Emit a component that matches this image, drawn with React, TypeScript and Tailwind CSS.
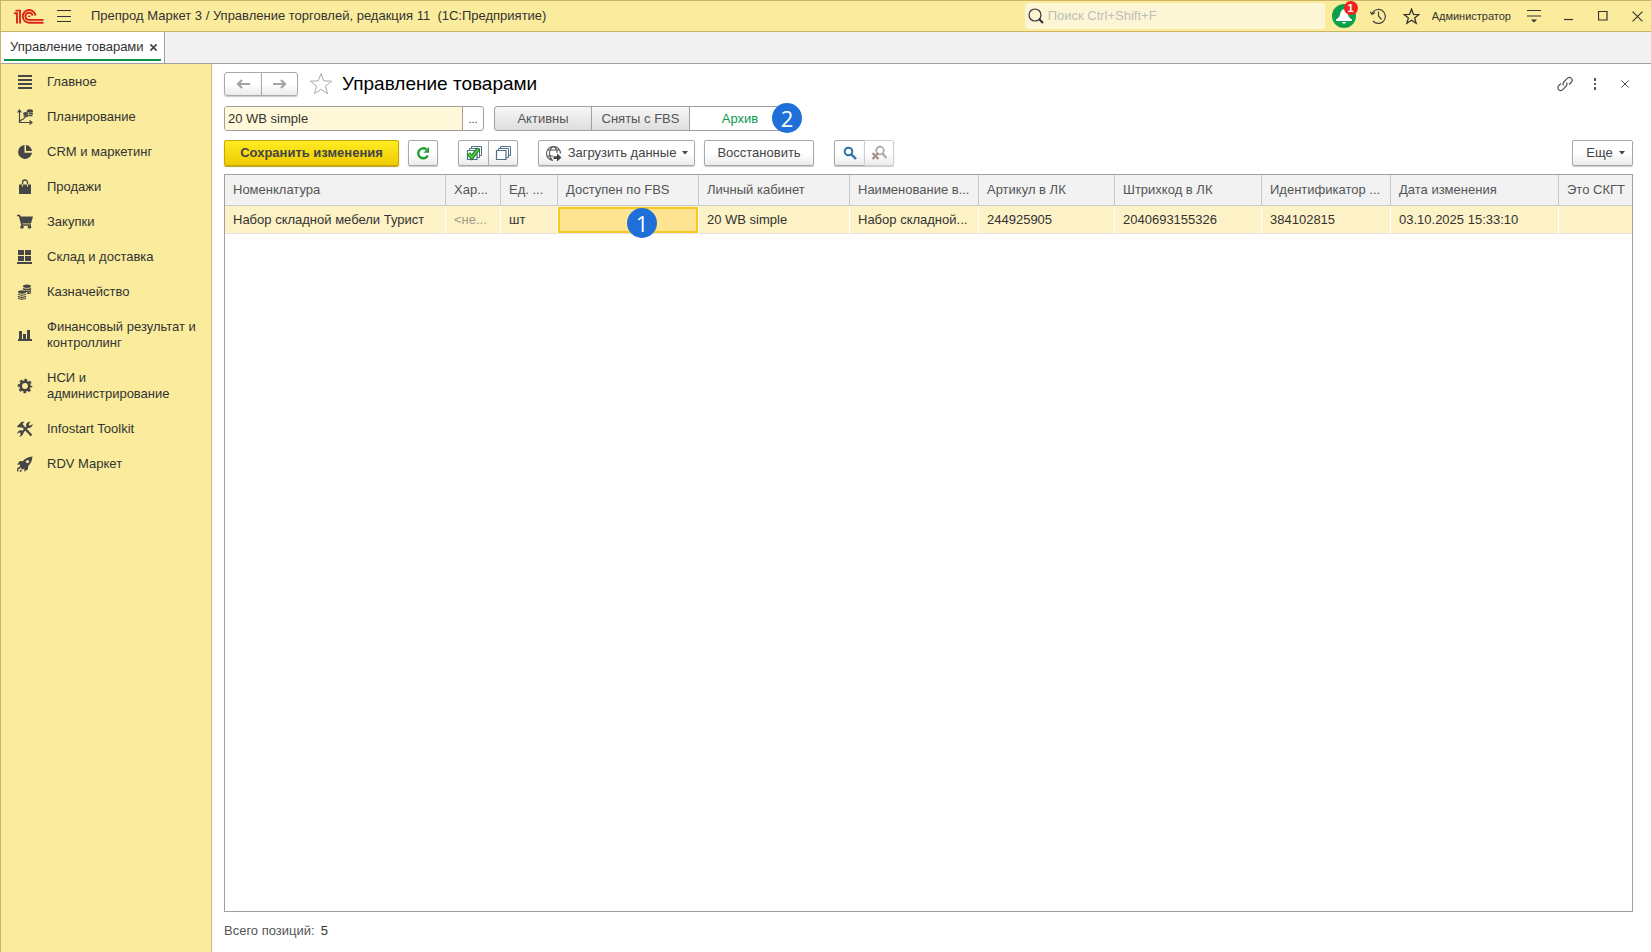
import type { ReactNode } from "react";
import { clsx } from "clsx";

type IconProps = { className?: string };

const btn =
  "flex items-center justify-center border border-[#a9a9a9] bg-linear-to-b from-white from-50% to-[#ebebeb] text-[#444] shadow-[0_1px_1px_#c8c8c8]";

function Svg({ size, box = size, children, className }: { size: number; box?: number; children: ReactNode; className?: string }) {
  return (
    <svg width={size} height={size} viewBox={`0 0 ${box} ${box}`} className={clsx("shrink-0", className)} fill="none" aria-hidden="true">
      {children}
    </svg>
  );
}

function Logo() {
  return (
    <svg width="30" height="15" viewBox="0 0 30 15" fill="none" stroke="#dc2418" strokeWidth="1.9" className="shrink-0" aria-hidden="true">
      <path d="M0 4.300h3V14.500M1.500 1.600H6V14.500" />
      <path d="M21.500 6.500A6.400 6.400 0 1 0 15 13.800h14.500" />
      <path d="M18.500 6.600A3.600 3.600 0 1 0 15 10.900h14.500" />
      <path d="M14 7.300h2.300" strokeWidth="1.400" />
    </svg>
  );
}

const MainIcon = () => (
  <Svg size={16}>
    <path d="M1 2h14M1 6h14M1 10h14M1 14h14" stroke="#464646" strokeWidth="2" />
  </Svg>
);
const PlanIcon = () => (
  <Svg size={16}>
    <path d="M2.500 14V2M2 13.500h12M.5 3.500 2.500 1l2 2.500M12.500 11.500l2.500 2-2.500 2M3 12l2-1.500 1.500-.5L8 8l2-.5 1-1.500" stroke="#464646" strokeWidth="1.200" />
    <ellipse cx="12.800" cy="1.900" rx="3.200" ry="1.600" fill="#464646" />
    <ellipse cx="8.800" cy="4.400" rx="2.800" ry="1.500" fill="#464646" />
    <path d="M6.500 6.800h5M12 4.500h4M12 6.500h3.500" stroke="#464646" strokeWidth="1.400" />
  </Svg>
);
const PieIcon = () => (
  <Svg size={16}>
    <path d="M7.500 1A7 7 0 1 0 15 8.800H7.500z" fill="#464646" />
    <path d="M9 1a6.500 6.500 0 0 1 6 6H9z" fill="#464646" />
  </Svg>
);
const BagIcon = () => (
  <Svg size={16}>
    <path d="M2 5.500h12V15H2z" fill="#464646" />
    <path d="M5.500 5.500V3.500a2.500 2.500 0 0 1 5 0v2" stroke="#464646" strokeWidth="1.300" />
    <path d="M5.500 5.500v2M10.500 5.500v2" stroke="#faec9c" />
  </Svg>
);
const CartIcon = () => (
  <Svg size={16}>
    <path d="M0 1.500h2.500L5 11h9" stroke="#464646" strokeWidth="1.600" />
    <path d="M3 2.500h13l-2 7H5z" fill="#464646" />
    <circle cx="5" cy="13" r="1.800" fill="#464646" />
    <circle cx="12.500" cy="13" r="1.800" fill="#464646" />
  </Svg>
);
const StockIcon = () => (
  <Svg size={16}>
    <path d="M1 1h6v5H1zM8 1h6v5H8zM1 7h6v5H1zM8 7h6v5H8zM0 13h15v2H0z" fill="#464646" />
  </Svg>
);
const CoinsIcon = () => (
  <Svg size={16}>
    <ellipse cx="10" cy="2.200" rx="4" ry="1.700" fill="#464646" />
    <path d="M6 4.500c1 1.300 7 1.300 8 0M8 6.800c2 1 5 .8 6-.3M10 9c2 .5 3 .2 4-.5" stroke="#464646" strokeWidth="1.400" />
    <ellipse cx="5" cy="8" rx="4" ry="1.700" fill="#464646" />
    <path d="M1 10c1 1.500 7 1.500 8 0M1 12.200c1 1.500 7 1.500 8 0M1 14c1 1.500 7 1.500 8 0" stroke="#464646" strokeWidth="1.300" />
  </Svg>
);
const ChartIcon = () => (
  <Svg size={16}>
    <path d="M2 4h3v8H2zM6 7h3v5H6zM10 3h3v9h-3zM1 12h14v2H1z" fill="#464646" />
  </Svg>
);
const GearIcon = () => (
  <Svg size={16}>
    <circle cx="8" cy="8" r="4.300" stroke="#464646" strokeWidth="2.800" />
    <circle cx="8" cy="8" r="6.200" stroke="#464646" strokeWidth="2.200" strokeDasharray="2.600 2.270" strokeDashoffset="1.300" />
  </Svg>
);
const ToolsIcon = () => (
  <Svg size={16}>
    <path d="M4.500 4 14.500 14.500" stroke="#464646" strokeWidth="2.400" />
    <path d="M0 5.500 4.500.8h3L5.500 3l1 1.500L3.800 7 2.500 5.800 1.300 6.800z" fill="#464646" />
    <path d="M12 4.500 3.500 13" stroke="#464646" strokeWidth="2.200" />
    <path d="M13.500.8 11.800 3v1.500h1.700L15.700 3A4 4 0 0 1 11 7L9 5a4 4 0 0 1 4.500-4.200zM2 15.500l2-2v-2h-2L.2 13A3.500 3.500 0 0 1 5 9.500l1.500 1.500A4 4 0 0 1 2 15.500z" fill="#464646" />
  </Svg>
);
const RocketIcon = () => (
  <Svg size={16}>
    <path d="M15.500.5C11 .8 8 2.500 6 5L2.500 5.200.2 8.800l3-.3-.7 2.300 2.700 2.700 2.300-.7-.3 3 3.800-2.500.2-3.300C13.500 8 15.200 5 15.500.500z" fill="#464646" />
    <circle cx="10.500" cy="5.500" r="1.600" fill="#faec9c" />
    <path d="M.5 15.500 1 12.500l2-1M3 15.500l1.500-1.500" stroke="#464646" strokeWidth="1.500" />
  </Svg>
);

const sections: { label: string; Icon: () => ReactNode }[] = [
  { label: "Главное", Icon: MainIcon },
  { label: "Планирование", Icon: PlanIcon },
  { label: "CRM и маркетинг", Icon: PieIcon },
  { label: "Продажи", Icon: BagIcon },
  { label: "Закупки", Icon: CartIcon },
  { label: "Склад и доставка", Icon: StockIcon },
  { label: "Казначейство", Icon: CoinsIcon },
  { label: "Финансовый результат и контроллинг", Icon: ChartIcon },
  { label: "НСИ и администрирование", Icon: GearIcon },
  { label: "Infostart Toolkit", Icon: ToolsIcon },
  { label: "RDV Маркет", Icon: RocketIcon },
];

const columns = [
  { title: "Номенклатура", value: "Набор складной мебели Турист", width: "w-[221px]" },
  { title: "Хар...", value: "<не...", width: "w-[55px]", muted: true },
  { title: "Ед. ...", value: "шт", width: "w-[57px]" },
  { title: "Доступен по FBS", value: "", width: "w-[141px]", selected: true },
  { title: "Личный кабинет", value: "20 WB simple", width: "w-[151px]" },
  { title: "Наименование в...", value: "Набор складной...", width: "w-[129px]" },
  { title: "Артикул в ЛК", value: "244925905", width: "w-[136px]" },
  { title: "Штрихкод в ЛК", value: "2040693155326", width: "w-[147px]" },
  { title: "Идентификатор ...", value: "384102815", width: "w-[129px]" },
  { title: "Дата изменения", value: "03.10.2025 15:33:10", width: "w-[168px]" },
  { title: "Это СКГТ", value: "", width: "w-[74px]" },
];

function Cross({ size, width = 1.2, className }: { size: number; width?: number; className?: string }) {
  return (
    <Svg size={size} box={10} className={className}>
      <path d="M.5.5l9 9M9.500.5l-9 9" stroke="currentColor" strokeWidth={width} />
    </Svg>
  );
}

function Caret() {
  return (
    <svg width="6" height="4" viewBox="0 0 6 4" fill="currentColor" aria-hidden="true">
      <path d="M0 0h6L3 3.500z" />
    </svg>
  );
}

function Star({ size, className, width }: IconProps & { size: number; width: number }) {
  return (
    <Svg size={size} box={24} className={className}>
      <path d="M12 1.500l2.700 7.400 7.900.3-6.200 4.900 2.200 7.600L12 17.300l-6.600 4.400 2.200-7.600L1.400 9.200l7.900-.3z" stroke="currentColor" strokeWidth={width} />
    </Svg>
  );
}

function Marker({ children, className }: { children: ReactNode; className: string }) {
  return (
    <span
      className={clsx(
        "absolute z-10 flex size-[30px] items-center justify-center rounded-full bg-[#1f6fd8] font-['Open_Sans',sans-serif] text-[22px] leading-none text-white",
        className,
      )}
    >
      {children}
    </span>
  );
}

function TitleBar() {
  return (
    <header className="flex h-8 items-center border-y border-[#cbb567] bg-[#faec9c] pr-2 pl-[13px]">
      <Logo />
      <button aria-label="Меню" className="ml-[13px]">
        <Svg size={14}>
          <path d="M0 1.500h14M0 7.500h14M0 12.500h14" stroke="#333" strokeWidth="1.200" />
        </Svg>
      </button>
      <h1 className="ml-5 text-[13px] whitespace-pre">Препрод Маркет 3 / Управление торговлей, редакция 11&nbsp; (1С:Предприятие)</h1>
      <label className="ml-auto flex h-[26px] w-[300px] items-center gap-1 rounded-sm bg-[#fdf6d5] pl-[3px]">
        <Svg size={16}>
          <circle cx="7" cy="7" r="6" stroke="#333" strokeWidth="1.200" />
          <path d="M11 11l4 4" stroke="#333" strokeWidth="2.200" />
        </Svg>
        <input aria-label="Поиск" placeholder="Поиск Ctrl+Shift+F" className="min-w-0 flex-1 bg-transparent text-[13px] outline-none placeholder:text-[#bdbdb9]" />
      </label>
      <button aria-label="Уведомления" className="relative ml-[7px] flex size-6 items-center justify-center rounded-full bg-[#0ca04d]">
        <Svg size={18}>
          <path d="M9 2C6.500 2.500 5.500 5 5 7.500c-.5 2.500-2 4-4 5V14h16v-1.500c-2-1-3.500-2.500-4-5C12.500 5 11.500 2.500 9 2zM6.500 15h5L9 17z" fill="#fff" />
        </Svg>
        <span className="absolute -top-[3px] -right-[2px] flex size-[14px] items-center justify-center rounded-full bg-[#f2201f] text-[11px] leading-none font-bold text-white">1</span>
      </button>
      <button aria-label="История" className="ml-[14px]">
        <Svg size={16}>
          <path d="M2 5.500A7 7 0 1 1 3 13M0 3.500l2 3 3-2M8.500 3.500V8l3 3.500" stroke="#444" strokeWidth="1.200" />
        </Svg>
      </button>
      <button aria-label="Избранное" className="ml-[17px]">
        <Star size={17} width={1.8} className="text-[#333]" />
      </button>
      <button className="ml-3 text-[11px]">Администратор</button>
      <button aria-label="Настройки" className="ml-4">
        <Svg size={14}>
          <path d="M0 1.500h14M0 7h14" stroke="#333" strokeWidth="1.200" />
          <path d="M4 10.500h6L7 13.500z" fill="#333" />
        </Svg>
      </button>
      <button aria-label="Свернуть" className="ml-[23px]">
        <Svg size={10}>
          <path d="M0 8.500h9" stroke="#333" strokeWidth="1.200" />
        </Svg>
      </button>
      <button aria-label="Развернуть" className="ml-6">
        <Svg size={10}>
          <path d="M.5.5h8.500v8.500H.5z" stroke="#333" strokeWidth="1.200" />
        </Svg>
      </button>
      <button aria-label="Закрыть" className="ml-6">
        <Cross size={11} width={1} />
      </button>
    </header>
  );
}

function TabBar() {
  return (
    <div className="flex h-8 border-b border-[#a0a0a0] bg-[#f1f1f1]">
      <div className="flex border-r border-[#a0a0a0] bg-white px-[3px] pb-[2px]">
        <div className="flex items-center gap-[6px] border-b-2 border-[#0a9347] pt-[3px] pr-1 pl-[6px]">
          <button className="text-[13px]">Управление товарами</button>
          <button aria-label="Закрыть вкладку">
            <Cross size={7} width={2.400} className="text-[#444]" />
          </button>
        </div>
      </div>
    </div>
  );
}

function Sidebar() {
  return (
    <nav className="flex w-[211px] shrink-0 flex-col gap-[19px] border-r border-[#cbbd76] bg-[#faec9c] pt-[10px]">
      {sections.map(({ label, Icon }) => (
        <a key={label} href="#" className="flex items-center gap-[14px] pr-3 pl-4 leading-4">
          <Icon />
          <span>{label}</span>
        </a>
      ))}
    </nav>
  );
}

function Heading() {
  return (
    <div className="flex h-6 items-center">
      <div className="flex h-6 text-[#a0a0a0]">
        <button aria-label="Назад" className={clsx(btn, "w-[38px] rounded-l-[3px]")}>
          <Svg size={14}>
            <path d="M14 7H2M6 3L2 7l4 4" stroke="#a3a3a3" strokeWidth="2.200" />
          </Svg>
        </button>
        <button aria-label="Вперед" className={clsx(btn, "-ml-px w-[37px] rounded-r-[3px]")}>
          <Svg size={14}>
            <path d="M0 7h12M8 3l4 4-4 4" stroke="#a3a3a3" strokeWidth="2.200" />
          </Svg>
        </button>
      </div>
      <button aria-label="В избранное" className="ml-[11px]">
        <Star size={24} width={1} className="text-[#a5abb3]" />
      </button>
      <h2 className="ml-[9px] text-[19px] leading-6 text-black">Управление товарами</h2>
      <button aria-label="Ссылка" className="ml-auto">
        <Svg size={16}>
          <path d="M6.500 9.500A3 3 0 0 1 6.800 6l3.500-3.700a2.800 2.800 0 0 1 4 4L12 8.500M9.500 6.500a3 3 0 0 1-.3 3.500l-3.500 3.700a2.800 2.800 0 0 1-4-4L4 7.500" stroke="#555" strokeWidth="1.200" />
        </Svg>
      </button>
      <button aria-label="Еще действия" className="ml-4">
        <Svg size={12}>
          <path d="M5 0h2v3H5zM5 5h2v2H5zM5 9h2v3H5z" fill="#555" />
        </Svg>
      </button>
      <button aria-label="Закрыть форму" className="mr-1 ml-5">
        <Cross size={8} className="text-[#444]" />
      </button>
    </div>
  );
}

function Filters() {
  const toggle = "relative flex items-center justify-center border border-[#a0a0a0]";
  const idle = "bg-linear-to-b from-[#f7f7f7] to-[#dedede] text-[#555]";
  return (
    <div className="mt-[10px] flex h-[25px]">
      <div className="flex w-[260px] rounded-[3px] border border-[#a0a0a0]">
        <input aria-label="Личный кабинет" defaultValue="20 WB simple" className="min-w-0 flex-1 rounded-l-[2px] bg-[#fff8d9] pl-[3px] outline-none" />
        <button aria-label="Выбрать" className="w-[21px] border-l border-[#a0a0a0] text-[11px] leading-4">...</button>
      </div>
      <div className="ml-[10px] flex">
        <button className={clsx(toggle, idle, "w-[98px] rounded-l-[3px]")}>Активны</button>
        <button className={clsx(toggle, idle, "-ml-px w-[99px]")}>Сняты с FBS</button>
        <button className={clsx(toggle, "-ml-px w-[102px] rounded-r-[3px] bg-white text-[#0a9b4b]")}>
          Архив
          <Marker className="-top-[4px] -right-[12px]">2</Marker>
        </button>
      </div>
    </div>
  );
}

function StackIcon({ checked }: { checked?: boolean }) {
  return (
    <Svg size={16}>
      <path d="M5.500 3.500v-2h10v9H13M3.500 5.500v-2h10v9H11" stroke="#4d7187" strokeWidth="1" />
      <path d="M1.500 5.500h9.500v9H1.500z" fill="#fff" stroke="#4d7187" strokeWidth="1.200" />
      {checked && (
        <>
          <path d="M2.500 8.500l3.300 4L12.500 3.500" stroke="#1d7f22" strokeWidth="4" />
          <path d="M2.800 9l3 3.300L12.300 4" stroke="#4fcf3c" strokeWidth="2" />
        </>
      )}
    </Svg>
  );
}

function Toolbar() {
  return (
    <div className="mt-[9px] flex h-[26px]">
      <button className="w-[175px] rounded-[2px] border border-[#c5a900] bg-linear-to-b from-[#ffec1f] to-[#efcb00] text-[13px] font-bold text-[#444] shadow-[0_1px_1px_#b9a021]">
        Сохранить изменения
      </button>
      <button aria-label="Обновить" className={clsx(btn, "ml-[9px] w-[30px] rounded-[2px]")}>
        <Svg size={14}>
          <path d="M11.800 9.500A5 5 0 1 1 10.300 3.300" stroke="#20a12f" strokeWidth="2.400" />
          <path d="M13 .8v6H7.500z" fill="#20a12f" />
        </Svg>
      </button>
      <div className="ml-5 flex">
        <button aria-label="Отметить все" className={clsx(btn, "w-[31px] rounded-l-[2px]")}>
          <StackIcon checked />
        </button>
        <button aria-label="Снять отметки" className={clsx(btn, "-ml-px w-[30px] rounded-r-[2px]")}>
          <StackIcon />
        </button>
      </div>
      <button className={clsx(btn, "ml-5 w-[157px] gap-[6px] rounded-[2px]")}>
        <Svg size={17}>
          <path d="M8 15.500a7 7 0 1 1 7.500-7M7.500 15.500C3.500 12 3.500 5 8 1.500M8.500 1.500c3 2 4 4 3.500 6.500M2.500 5h12M1.500 11H8" stroke="#555" strokeWidth="1.100" />
          <path d="M8.500 11.200h3.500V8.500l4.500 4-4.500 4V14H8.500z" fill="#444" />
        </Svg>
        <span>Загрузить данные</span>
        <Caret />
      </button>
      <button className={clsx(btn, "ml-[9px] w-[110px] rounded-[2px]")}>Восстановить</button>
      <div className="ml-5 flex">
        <button aria-label="Найти" className={clsx(btn, "w-[31px] rounded-l-[2px]")}>
          <Svg size={14}>
            <circle cx="5.500" cy="5.500" r="3.800" stroke="#2b72a8" strokeWidth="2" />
            <path d="M8.500 8.500l4.500 4.500" stroke="#2b72a8" strokeWidth="2.400" />
          </Svg>
        </button>
        <button aria-label="Отменить поиск" className={clsx(btn, "-ml-px w-[30px] rounded-r-[2px] border-[#cfcfcf]")}>
          <Svg size={16}>
            <circle cx="9" cy="5.500" r="3.800" stroke="#a7abae" strokeWidth="1.800" />
            <path d="M11.500 8.500l4 4.500" stroke="#a7abae" strokeWidth="2.200" />
            <path d="M1.500 8l6 6M7.500 8l-6 6" stroke="#a88f8a" strokeWidth="2.400" />
          </Svg>
        </button>
      </div>
      <button className={clsx(btn, "ml-auto w-[61px] gap-[6px] rounded-[2px] pl-[6px]")}>
        <span>Еще</span>
        <Caret />
      </button>
    </div>
  );
}

function Goods() {
  return (
    <div className="mt-2 flex-1 overflow-hidden border border-[#a0a0a0]">
      <table className="w-full table-fixed border-separate border-spacing-0 text-left whitespace-nowrap">
        <thead>
          <tr className="h-[31px]">
            {columns.map((c) => (
              <th
                key={c.title}
                className={clsx(c.width, "border-r border-b border-[#c9c9c9] bg-[#f2f2f2] p-0 pl-2 font-normal text-[#555] last:border-r-0")}
              >
                {c.title}
              </th>
            ))}
          </tr>
        </thead>
        <tbody>
          <tr className="h-7">
            {columns.map((c) =>
              c.selected ? (
                <td key={c.title} className="relative border-r border-b border-r-white border-b-[#e4e4e4] bg-[#fdf1c6] p-0">
                  <div className="h-[26px] border-2 border-[#f9ca24] bg-[#fee491]" />
                  <Marker className="top-[2px] left-[69px]">1</Marker>
                </td>
              ) : (
                <td
                  key={c.title}
                  className={clsx(
                    "border-r border-b border-r-white border-b-[#e4e4e4] bg-[#fdf1c6] p-0 pl-2 last:border-r-0",
                    c.muted ? "text-[#a19c8c]" : "text-[#333]",
                  )}
                >
                  {c.value}
                </td>
              ),
            )}
          </tr>
        </tbody>
      </table>
    </div>
  );
}

export default function App() {
  return (
    <div className="flex min-h-screen flex-col border-l border-[#cbb567] bg-white font-['Liberation_Sans',Arial,sans-serif] text-[13px] text-[#333]">
      <TitleBar />
      <TabBar />
      <div className="flex flex-1">
        <Sidebar />
        <main className="flex min-w-0 flex-1 flex-col pt-2 pr-[18px] pl-3">
          <Heading />
          <Filters />
          <Toolbar />
          <Goods />
          <footer className="flex h-10 items-center gap-[6px] pb-[2px] text-[#555]">
            <span>Всего позиций:</span>
            <span className="text-[#333]">5</span>
          </footer>
        </main>
      </div>
    </div>
  );
}
